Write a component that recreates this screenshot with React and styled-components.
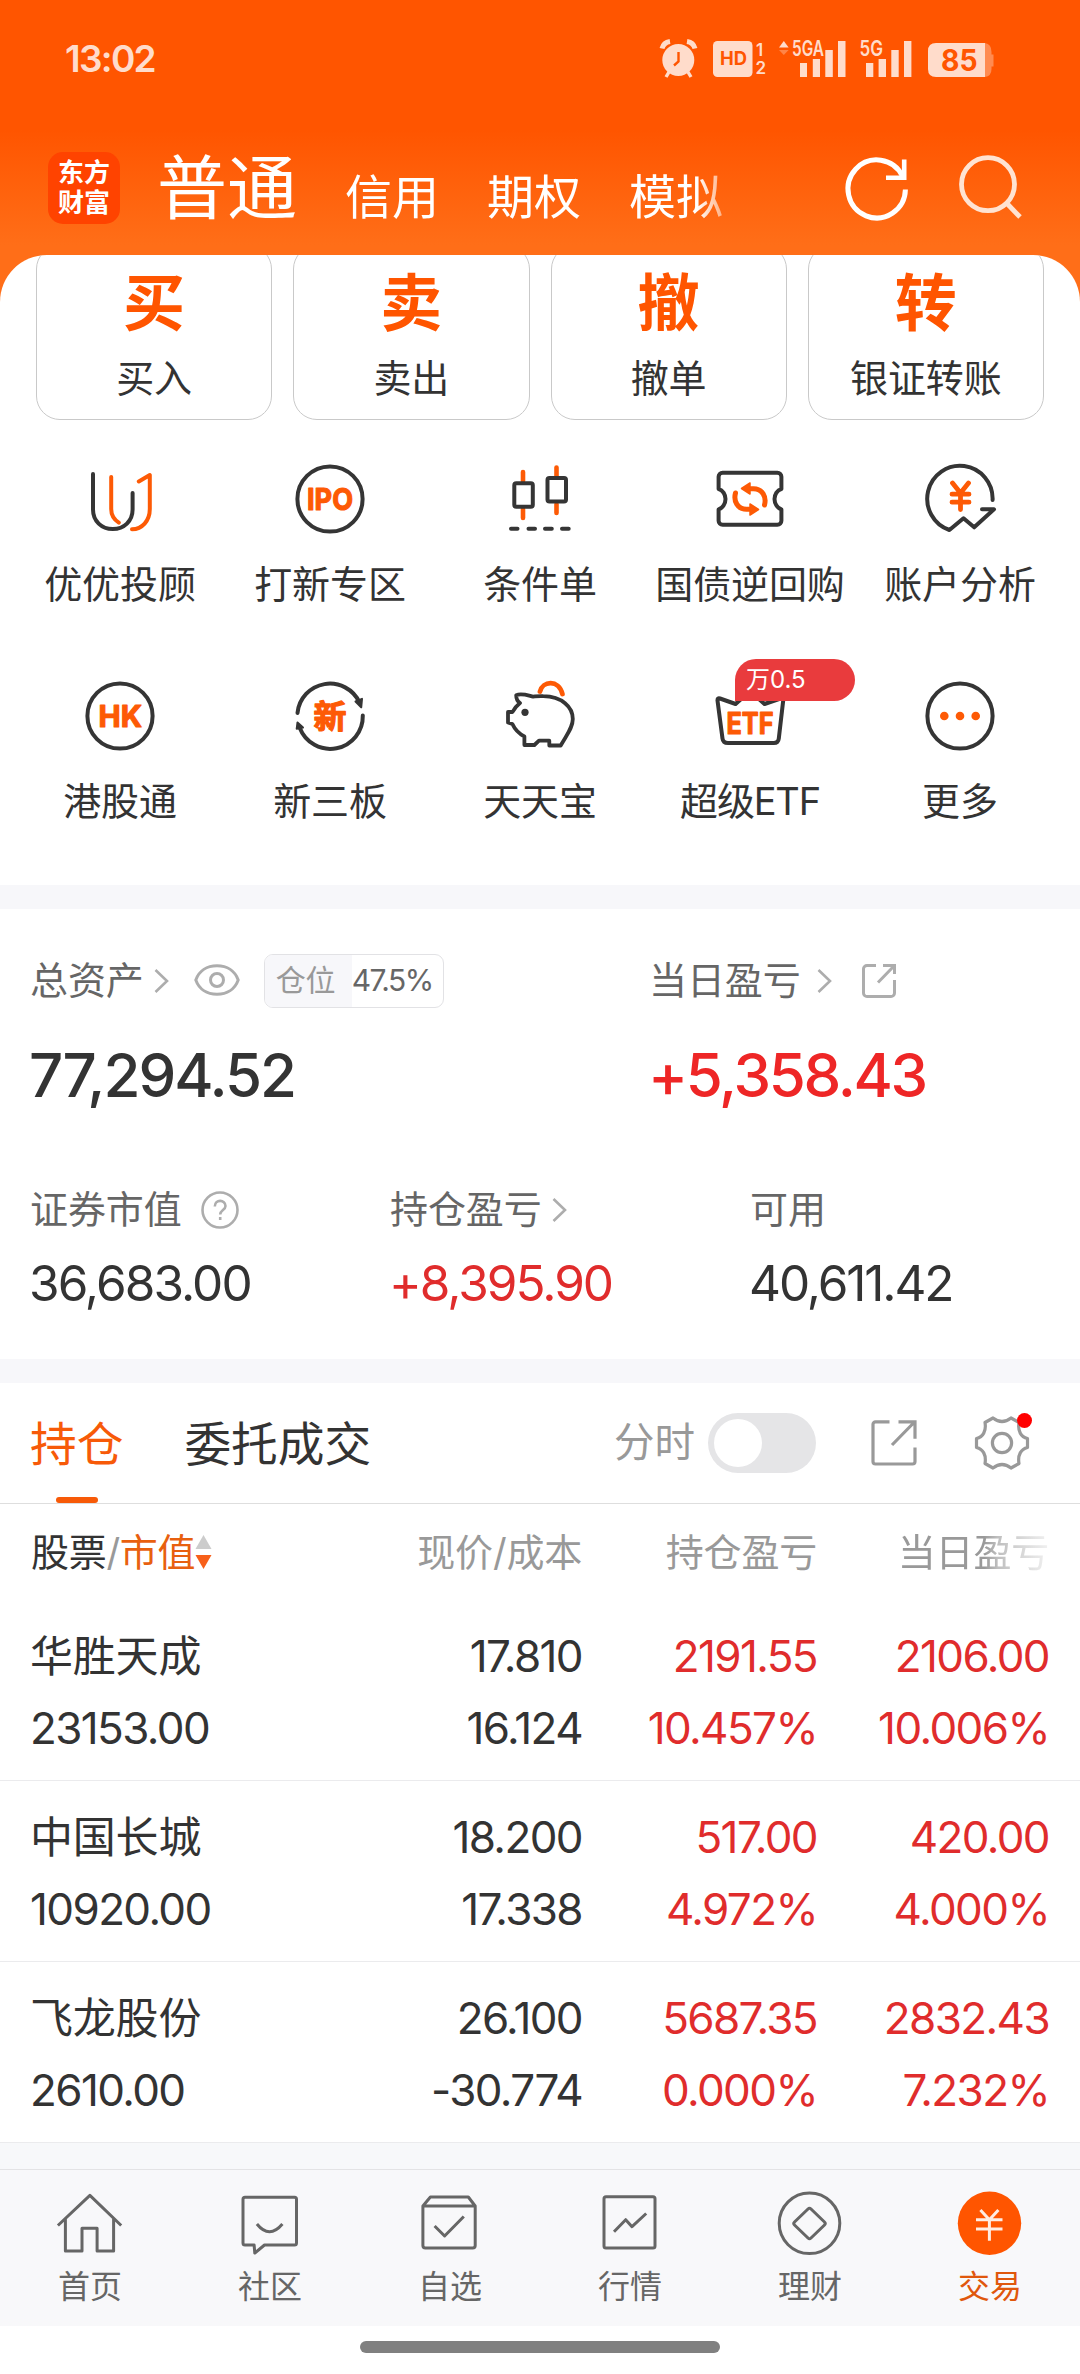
import React from "react";
import styled, { createGlobalStyle } from "styled-components";

const ORANGE = "#ff5500";
const RED = "#e02c2c";
const INK = "#333333";

const Global = createGlobalStyle`
  * { box-sizing: border-box; }
  body {
    margin: 0;
    background: #fff;
    color: ${INK};
    font-family: Inter, "Noto Sans CJK SC", sans-serif;
    -webkit-font-smoothing: antialiased;
  }
  svg { display: block; flex: none; overflow: visible; }
`;

const Screen = styled.div`
  width: 1080px;
  height: 2374px;
  display: flex;
  flex-direction: column;
  overflow: hidden;
`;

/* ---------- header ---------- */
const Hero = styled.header`
  height: 302px;
  margin-bottom: -47px;
  background: linear-gradient(180deg, #ff5500 0, #ff5500 130px, #ff6e18 245px, #ff6e18 100%);
`;

const StatusBar = styled.div`
  height: 120px;
  padding: 0 86px 2px 65px;
  display: flex;
  align-items: center;
  justify-content: space-between;
  color: #ffdccb;
`;

const Clock = styled.span`
  font-size: 37px;
  font-weight: 600;
  line-height: 40px;
  letter-spacing: -1.7px;
`;

const NavBar = styled.div`
  height: 135px;
  padding: 0 54px 0 48px;
  display: flex;
  align-items: center;
`;

const Logo = styled.div`
  width: 72px;
  height: 72px;
  border-radius: 15px;
  background: #ff4300;
  color: #fff;
  display: grid;
  place-content: center;
  font-size: 26px;
  line-height: 30px;
  font-weight: 700;
`;

const AccountTabs = styled.nav`
  margin: 11px 0 0 37px;
  width: 580px;
  display: flex;
  align-items: baseline;
  gap: 48px;
  color: #fff;
  mask-image: linear-gradient(90deg, #000 540px, transparent 590px);
`;

const AccountTab = styled.span`
  font-size: ${(p) => (p.$active ? 70 : 47)}px;
  line-height: 90px;
  white-space: nowrap;
`;

const NavIcons = styled.div`
  margin-left: auto;
  display: flex;
  align-items: center;
  gap: 49px;
`;

/* ---------- trade panel ---------- */
const TradePanel = styled.section`
  height: 630px;
  flex: none;
  background: #fff;
  border-radius: 47px 47px 0 0;
  overflow: hidden;
`;

const TradeCards = styled.div`
  margin-top: -10px;
  padding: 0 36px;
  display: grid;
  grid-template-columns: repeat(4, 1fr);
  gap: 21px;
`;

const TradeCard = styled.div`
  height: 175px;
  border: 1px solid #c9c9c9;
  border-radius: 24px;
  padding-top: 23px;
  display: flex;
  flex-direction: column;
  align-items: center;
  gap: 14px;
`;

const TradeGlyph = styled.span`
  font-size: 62px;
  line-height: 70px;
  font-weight: 700;
  color: ${ORANGE};
`;

const Label = styled.span`
  font-size: 38px;
  line-height: 50px;
  letter-spacing: ${(p) => p.$tight ? "-1.2px" : "-0.1px"};
  white-space: nowrap;
`;

const ToolGrid = styled.div`
  margin-top: 39px;
  padding: 0 15px;
  display: grid;
  grid-template-columns: repeat(5, 210px);
  row-gap: 67px;
`;

const Tool = styled.div`
  position: relative;
  display: flex;
  flex-direction: column;
  align-items: center;
  gap: 20px;
`;

const Badge = styled.span`
  position: absolute;
  left: 90px;
  top: -17px;
  width: 120px;
  height: 42px;
  padding-left: 11px;
  border-radius: 21px 21px 21px 0;
  background: #e93b3d;
  color: #fff;
  font-size: 24px;
  line-height: 42px;
`;

const Divider = styled.div`
  height: 24px;
  flex: none;
  background: #f7f7fa;
`;

/* ---------- assets ---------- */
const Assets = styled.section`
  height: 450px;
  flex: none;
  padding: 45px 30px 0;
`;

const AssetGrid = styled.div`
  display: grid;
  grid-template-columns: ${(p) => p.$cols};
  margin-top: ${(p) => p.$top || 0}px;
`;

const Metric = styled.div`
  display: flex;
  flex-direction: column;
  gap: ${(p) => p.$gap}px;
`;

const MetricHead = styled.div`
  height: ${(p) => p.$h}px;
  display: flex;
  align-items: center;
  font-size: 38px;
  line-height: 38px;
  letter-spacing: -0.1px;
  color: #666;
  white-space: nowrap;

  & > svg { margin-left: ${(p) => p.$space || 10}px; }
  & > svg + svg { margin-left: ${(p) => p.$next || 25}px; }
`;

const MetricText = styled.span`
  padding-bottom: 2px;
`;

const MetricValue = styled.div`
  margin-left: -1px;
  font-size: ${(p) => (p.$large ? 60 : 49.5)}px;
  line-height: ${(p) => (p.$large ? 60 : 50)}px;
  font-weight: ${(p) => (p.$large ? 500 : 400)};
  letter-spacing: ${(p) => p.$track}px;
  color: ${(p) => (p.$up ? (p.$large ? "#ee2626" : RED) : INK)};
  white-space: nowrap;
`;

const PositionPill = styled.span`
  margin-left: 24px;
  width: 180px;
  height: 54px;
  display: flex;
  border: 1px solid #e2e2e5;
  border-radius: 9px;
  overflow: hidden;
  font-size: 30px;
  line-height: 51px;
`;

const PillName = styled.span`
  width: 87px;
  padding-left: 11px;
  background: #f7f7fa;
  color: #999;
`;

const PillValue = styled.span`
  flex: 1;
  letter-spacing: -1.5px;
`;

/* ---------- holdings ---------- */
const TabRow = styled.div`
  height: 121px;
  flex: none;
  padding: 0 51px 0 30px;
  display: flex;
  align-items: center;
  border-bottom: 1px solid #dedede;
`;

const HoldTab = styled.div`
  position: relative;
  margin-right: 61px;
  padding-top: 2px;
  font-size: 46.7px;
  line-height: 118px;
  color: ${(p) => (p.$active ? "#f75a08" : INK)};

  &::after {
    content: "";
    display: ${(p) => (p.$active ? "block" : "none")};
    position: absolute;
    left: 26px;
    bottom: 0;
    width: 42px;
    height: 6px;
    border-radius: 3px;
    background: #f75a08;
  }
`;

const TabTools = styled.div`
  margin-left: auto;
  display: flex;
  align-items: center;
  color: #999;
  font-size: 40.5px;
  line-height: 60px;
`;

const Toggle = styled.span`
  margin: 0 55px 0 13px;
  width: 108px;
  height: 60px;
  padding: 6px;
  border-radius: 30px;
  background: #e5e5e7;

  &::before {
    content: "";
    display: block;
    width: 48px;
    height: 48px;
    border-radius: 50%;
    background: #fff;
  }
`;

const GearWrap = styled.span`
  position: relative;
  margin-left: 58px;

  &::after {
    content: "";
    position: absolute;
    left: 42px;
    top: -3px;
    width: 15px;
    height: 15px;
    border-radius: 50%;
    background: #ff0000;
  }
`;

const Row = styled.div`
  height: ${(p) => (p.$head ? 96 : 181)}px;
  flex: none;
  padding: ${(p) => (p.$head ? "0 31px 0 31px" : "24px 31px 0 30px")};
  display: grid;
  grid-template-columns: 1fr 200px 235px 232px;
  align-items: ${(p) => (p.$head ? "center" : "start")};
  border-bottom: ${(p) => (p.$head ? 0 : 1)}px solid #ebebed;
  font-size: 38px;
  line-height: 50px;
  color: #999;
`;

const HeadCell = styled.span`
  justify-self: end;
  letter-spacing: -0.2px;
  white-space: nowrap;
  mask-image: ${(p) => (p.$fade ? "linear-gradient(90deg, #000 86px, rgba(0,0,0,.62) 100px, rgba(0,0,0,.12) 152px)" : "none")};
`;

const SortCell = styled.span`
  display: flex;
  align-items: center;
  color: ${INK};
  letter-spacing: -0.3px;
`;

const Slash = styled.i`
  font-style: normal;
  color: #999;
`;

const SortKey = styled.b`
  font-weight: 400;
  color: #e8600f;
`;

const Cell = styled.div`
  display: flex;
  flex-direction: column;
  align-items: ${(p) => (p.$left ? "flex-start" : "flex-end")};
  gap: 8px;
  color: ${(p) => (p.$up ? RED : INK)};
`;

const Figure = styled.span`
  font-size: 44px;
  line-height: 64px;
  letter-spacing: -1.6px;
  white-space: nowrap;
`;

const StockName = styled.span`
  font-size: 43px;
  line-height: 64px;
  letter-spacing: -0.2px;
`;

/* ---------- bottom ---------- */
const Spacer = styled.div`
  height: 26px;
  flex: none;
  background: #f7f8fa;
`;

const BottomNav = styled.nav`
  height: 157px;
  flex: none;
  border-top: 1px solid #e3e3e5;
  background: #f8f8fa;
  display: grid;
  grid-template-columns: repeat(6, 180px);
`;

const BottomItem = styled.div`
  padding-top: 17px;
  display: flex;
  flex-direction: column;
  align-items: center;
  gap: 8px;
  font-size: 32px;
  line-height: 40px;
  color: ${(p) => (p.$active ? "#e0570c" : "#666")};
`;

const HomeBar = styled.div`
  width: 360px;
  height: 12px;
  flex: none;
  margin: 15px auto 0;
  border-radius: 6px;
  background: #808080;
`;

/* ---------- icons ---------- */
const StatusIcons = () => (
  <svg width="336" height="48" viewBox="658 36 336 48" fill="#ffdccb" fontFamily="Inter, sans-serif">
    <circle cx="678.3" cy="61" r="16" />
    <path d="M669 73l-3 5M688 73l3 5" stroke="#ffdccb" strokeWidth="3.4" />
    <path d="M662 49.5q1.5-6 8-7M695 49.5q-1.500-6-8-7" stroke="#ffdccb" strokeWidth="5" fill="none" />
    <path d="M678.500 53v9.500l-4.500 4" stroke="#ff5500" strokeWidth="2.400" fill="none" />
    <rect x="713" y="42" width="39.500" height="36" rx="4.500" />
    <text x="720" y="66" fontSize="18.500" fontWeight="700" fill="#ff5500" textLength="27" lengthAdjust="spacingAndGlyphs">HD</text>
    <text x="756" y="57" fontSize="17" fontWeight="600">1</text>
    <text x="755.500" y="75" fontSize="17" fontWeight="600">2</text>
    <path d="M779 48.500l4.800-6.500 4.800 6.500z" />
    <path d="M779 51h9.600l-4.800 5z" opacity=".35" />
    <text x="792" y="56.500" fontSize="21" fontWeight="600" textLength="32" lengthAdjust="spacingAndGlyphs">5GA</text>
    <path d="M800 64h7v14h-7zM812.800 60h7.200v18h-7.200zM825.300 51h7.500v27h-7.500zM838 42h7.500v36h-7.500z" />
    <text x="859.500" y="56.500" fontSize="21" fontWeight="600" textLength="23.500" lengthAdjust="spacingAndGlyphs">5G</text>
    <path d="M866 64h7.300v14h-7.300zM878.600 60h7.400v18h-7.400zM891.300 51h7.400v27h-7.400zM904 42h7.400v36h-7.400z" />
    <path d="M985 44q6.500 1 6.500 9v2.500h2v12h-2V70q0 7-6.500 8z" opacity=".4" />
    <path d="M985 44v34h-49q-8 0-8-8V52q0-8 8-8z" />
    <text x="941" y="72" fontSize="29.500" fontWeight="700" fill="#ff5500" textLength="36.500" lengthAdjust="spacingAndGlyphs">85</text>
  </svg>
);

const RefreshIcon = () => (
  <svg width="64" height="64" viewBox="844 155.500 64 64" fill="none" stroke="#fff" strokeWidth="5">
    <path d="M904.400 189A28.700 29 0 1 1 901.400 175.500" />
    <path d="M903.200 159v18.300H885" strokeWidth="4.600" />
  </svg>
);

const SearchIcon = () => (
  <svg width="68" height="66" viewBox="957 154.500 68 66" fill="none" stroke="#ffe3d2" strokeWidth="4.800">
    <circle cx="987" cy="183.700" r="26.500" />
    <path d="M1005.500 202.500L1019 216.500" />
  </svg>
);

const ToolIcon = ({ children }) => (
  <svg width="80" height="80" viewBox="0 0 80 80" fill="none" stroke="#353535" strokeWidth="4" strokeLinecap="round" strokeLinejoin="round">
    {children}
  </svg>
);

const OR = "#fd5a05";
const IconText = ({ x, y, w, size = 30, children }) => (
  <text x={x} y={y} fontSize={size} fontWeight="700" fontFamily='Inter, "Noto Sans CJK SC", sans-serif' fill={OR} stroke={OR} strokeWidth="1.2" textLength={w} lengthAdjust="spacingAndGlyphs">
    {children}
  </text>
);

const Swap = () => (
  <>
    <path d="M54.500 46c2.200-8-2-16.300-11-16.300h-3" stroke={OR} strokeWidth="5" />
    <path d="M31.500 29.500l8.500-5.500v11z" fill={OR} stroke={OR} strokeWidth="1.500" />
  </>
);

const tools = [
  {
    label: "优优投顾",
    icon: (
      <>
        <path d="M13 15v35.500C13 62 21.500 70 32.800 70s19.800-8 19.800-19.500V34" />
        <path d="M31.200 18v32c0 6 2.800 10.500 7.600 13.700M58.800 22.500L69.800 16v34c0 12-7.800 20-17.800 20.300" stroke={OR} />
      </>
    ),
  },
  {
    label: "打新专区",
    icon: (
      <>
        <circle cx="40" cy="40" r="32.600" />
        <IconText x="17" y="51" w="46">IPO</IconText>
      </>
    ),
  },
  {
    label: "条件单",
    icon: (
      <>
        <path d="M23 13v9M23 50v9M56.500 8.500V17M56.500 45v9" stroke={OR} strokeWidth="4.600" />
        <rect x="14.300" y="24.300" width="18.500" height="23.500" rx="2" />
        <rect x="47.500" y="19" width="18.500" height="23.500" rx="2" />
        <path d="M11 69.700h6.500M28.500 69.700H35M45 69.700h6.800M62 69.700h6.700" />
      </>
    ),
  },
  {
    label: "国债逆回购",
    icon: (
      <>
        <path d="M12.600 13.700h54.800a4 4 0 0 1 4 4V30C67 31 64.500 36 64.500 40s2.500 9 6.900 10.500v11.200a4 4 0 0 1-4 4H12.600a4 4 0 0 1-4-4V50.500C13 49 15.500 44 15.500 40S13 31 8.600 30V17.700a4 4 0 0 1 4-4Z" />
        <Swap />
        <g transform="rotate(180 40 40)"><Swap /></g>
      </>
    ),
  },
  {
    label: "账户分析",
    icon: (
      <>
        <path d="M72.600 41A32.700 33 0 1 0 29.400 71L43.500 59.300 54.200 68.300 74 50.300H62" />
        <path d="M32.500 24l8 10 8-10M32 35.200h17M32 43.200h17M40.500 35v15.500" stroke={OR} strokeWidth="4.800" />
      </>
    ),
  },
  {
    label: "港股通",
    icon: (
      <>
        <circle cx="40" cy="40" r="32.600" />
        <IconText x="18.500" y="51" w="43.500">HK</IconText>
      </>
    ),
  },
  {
    label: "新三板",
    icon: (
      <>
        <path d="M7.500 37A32.600 32.600 0 0 1 69.500 26.500M72.800 39.500A32.600 32.600 0 0 1 9.800 52" />
        <path d="M65.500 25.500l6.500-2.700-.8 8.500zM7.500 46.500l5.500 5-6.300 1.300z" fill="#353535" strokeWidth="2" />
        <IconText x="23.500" y="51.500" w="33" size={32}>新</IconText>
      </>
    ),
  },
  {
    label: "天天宝",
    icon: (
      <>
        <path d="M40 15.500C42.500 5 58.500 3 62.400 18" stroke={OR} strokeWidth="4.800" />
        <path d="M16.200 19.200c5-2.200 10.300-.2 17 1.400 3.500-.3 5.500-.6 10-.4C62 20.500 72.800 31 72.800 43c0 9-6 15.500-12.100 26.500H49.300v-4.800H39L34.400 69h-10v-8.500Q16 56 12.400 48L8 46.500V36h4.500Q15 31 20 27c-3-2-3.800-4-3.800-7.800Z" strokeWidth="3.800" />
        <circle cx="25" cy="36.300" r="3.600" fill="#353535" stroke="none" />
      </>
    ),
  },
  {
    label: "超级ETF",
    tight: true,
    badge: "万0.5",
    icon: (
      <>
        <path d="M10 22.500L25.600 28 40 15l14.500 13 16-5.500q3-.8 2.700 2l-4.400 38q-.5 4.500-5 4.500H18q-5 0-5.500-4.500l-5-38q-.2-2.800 2.500-2Z" />
        <IconText x="16.500" y="57.500" w="47">ETF</IconText>
      </>
    ),
  },
  {
    label: "更多",
    icon: (
      <>
        <circle cx="40" cy="40" r="32.600" />
        <g fill={OR} stroke="none">
          <circle cx="24.300" cy="40" r="4.300" />
          <circle cx="40" cy="40" r="4.300" />
          <circle cx="55.700" cy="40" r="4.300" />
        </g>
      </>
    ),
  },
];

const Chevron = () => (
  <svg width="15" height="24" viewBox="0 0 15 24" fill="none" stroke="#adadad" strokeWidth="2.600">
    <path d="M1.500 1l11.500 11L1.500 23" />
  </svg>
);

const EyeIcon = () => (
  <svg width="46" height="32" viewBox="0 1 46 32" fill="none" stroke="#adadad" strokeWidth="3">
    <path d="M1.800 16C5 7 13 1.800 23 1.800S41 7 44.200 16C41 25 33 30.200 23 30.200S5 25 1.800 16Z" />
    <circle cx="23" cy="16" r="6.500" />
  </svg>
);

const SmallShare = () => (
  <svg width="34" height="34" viewBox="0 0 34 34" fill="none" stroke="#adadad" strokeWidth="3">
    <path d="M14 1.500H5a3.500 3.500 0 0 0-3.500 3.500v24A3.500 3.500 0 0 0 5 32.500h24a3.500 3.500 0 0 0 3.500-3.500V16" />
    <path d="M21 1.500h11.500V10M32 2L16 18.500" />
  </svg>
);

const HelpIcon = () => (
  <svg width="38" height="38" viewBox="0 0 38 38" fill="none" stroke="#adadad" strokeWidth="2.600">
    <circle cx="19" cy="19" r="17.500" />
    <path d="M13.800 15.500c0-7.500 10.700-7.200 10.700-.6 0 4-5.300 4.200-5.300 8.600M19.200 26v3" />
  </svg>
);

const ShareIcon = () => (
  <svg width="46" height="46" viewBox="0 0 46 46" fill="none" stroke="#999" strokeWidth="3.200">
    <path d="M18.500 1.800H4.500a2.500 2.500 0 0 0-2.500 2.500v37.200A2.500 2.500 0 0 0 4.500 44h37a2.500 2.500 0 0 0 2.500-2.500V27.500M27.500 1.800H44v17M43 2.500L21 25" />
  </svg>
);

const GearIcon = () => (
  <svg width="54" height="54" viewBox="-27 -27 54 54" fill="none" stroke="#999" strokeWidth="3.200" strokeLinejoin="round">
    <circle r="9.600" />
    <path d="M-9-25Q0-18 9-25L17-20.500C15.500-12 19-6 25.500-4.500V4.500C19 6 15.500 12 17 20.500L9 25Q0 18-9 25L-17 20.500C-15.500 12-19 6-25.500 4.500V-4.500C-19-6-15.500-12-17-20.500Z" />
  </svg>
);

const SortIcon = () => (
  <svg width="17" height="36" viewBox="0 0 17 36">
    <path d="M8.500 1L16.500 15H.5z" fill="#ccc" />
    <path d="M8.500 35L16.500 21H.5z" fill="#f7601a" />
  </svg>
);

const BottomIcon = ({ children }) => (
  <svg width="72" height="72" viewBox="0 0 72 72" fill="none" stroke="#666" strokeWidth="3" strokeLinejoin="round">
    {children}
  </svg>
);

const bottomItems = [
  { label: "首页", icon: <path d="M3.900 38.500L35.900 8.300 67.200 38.500M11.400 31.500V64H28V41.300h15.100V64h16.500V31.500" /> },
  {
    label: "社区",
    icon: <path d="M11 10.300h49.500a2 2 0 0 1 2 2V56a2 2 0 0 1-2 2h-30L20.800 66 20.100 58H11a2 2 0 0 1-2-2V12.300a2 2 0 0 1 2-2ZM22.900 37q12.500 15.500 25.500 0" />,
  },
  {
    label: "自选",
    icon: <path d="M8.900 19L16.400 10h37.900l6.900 9v39.500a2.500 2.500 0 0 1-2.500 2.500H11.400a2.500 2.500 0 0 1-2.500-2.500ZM8.900 19h52.300M20.600 39l10 10 19.200-19.500" />,
  },
  {
    label: "行情",
    icon: <path d="M12 9.700h47a2 2 0 0 1 2 2V59a2 2 0 0 1-2 2H12a2 2 0 0 1-2-2V11.700a2 2 0 0 1 2-2ZM20 44.700l11.700-12 6.300 7L52.200 26.500" />,
  },
  {
    label: "理财",
    icon: (
      <>
        <circle cx="35.500" cy="36.300" r="30.300" />
        <path d="M34 22q1.500-1.500 3 0L50.500 35q1.500 1.500 0 3L37 51q-1.500 1.500-3 0L20.500 38q-1.500-1.500 0-3Z" />
      </>
    ),
  },
  {
    label: "交易",
    active: true,
    icon: (
      <>
        <circle cx="35.500" cy="36.300" r="31.700" fill={ORANGE} stroke="none" />
        <path d="M26.400 23l9 9.700 9-9.700M22 32.700h26.500M22 42h26.500M35.400 32.700v21" stroke="#ffece2" />
      </>
    ),
  },
];

const holdings = [
  { name: "华胜天成", rows: ["23153.00", "17.810", "16.124", "2191.55", "10.457%", "2106.00", "10.006%"] },
  { name: "中国长城", rows: ["10920.00", "18.200", "17.338", "517.00", "4.972%", "420.00", "4.000%"] },
  { name: "飞龙股份", rows: ["2610.00", "26.100", "-30.774", "5687.35", "0.000%", "2832.43", "7.232%"] },
];

const Pair = ({ top, bottom, up }) => (
  <Cell $up={up}>
    <Figure>{top}</Figure>
    <Figure>{bottom}</Figure>
  </Cell>
);

export default function App() {
  return (
    <Screen>
      <Global />
      <Hero>
        <StatusBar>
          <Clock>13:02</Clock>
          <StatusIcons />
        </StatusBar>
        <NavBar>
          <Logo>
            <span>东方</span>
            <span>财富</span>
          </Logo>
          <AccountTabs>
            <AccountTab $active>普通</AccountTab>
            <AccountTab>信用</AccountTab>
            <AccountTab>期权</AccountTab>
            <AccountTab>模拟</AccountTab>
          </AccountTabs>
          <NavIcons>
            <RefreshIcon />
            <SearchIcon />
          </NavIcons>
        </NavBar>
      </Hero>

      <TradePanel>
        <TradeCards>
          {[["买", "买入"], ["卖", "卖出"], ["撤", "撤单"], ["转", "银证转账"]].map(([glyph, name]) => (
            <TradeCard key={name}>
              <TradeGlyph>{glyph}</TradeGlyph>
              <Label>{name}</Label>
            </TradeCard>
          ))}
        </TradeCards>
        <ToolGrid>
          {tools.map((t) => (
            <Tool key={t.label}>
              <ToolIcon>{t.icon}</ToolIcon>
              <Label $tight={t.tight}>{t.label}</Label>
              {t.badge && <Badge>{t.badge}</Badge>}
            </Tool>
          ))}
        </ToolGrid>
      </TradePanel>

      <Divider />

      <Assets>
        <AssetGrid $cols="619px 1fr">
          <Metric $gap={37}>
            <MetricHead $h={54}>
              <MetricText>总资产</MetricText>
              <Chevron />
              <EyeIcon />
              <PositionPill>
                <PillName>仓位</PillName>
                <PillValue>47.5%</PillValue>
              </PositionPill>
            </MetricHead>
            <MetricValue $large $track={-2}>77,294.52</MetricValue>
          </Metric>
          <Metric $gap={37}>
            <MetricHead $h={54} $space={16} $next={30}>
              <MetricText>当日盈亏</MetricText>
              <Chevron />
              <SmallShare />
            </MetricHead>
            <MetricValue $large $up $track={-2.3}>+5,358.43</MetricValue>
          </Metric>
        </AssetGrid>
        <AssetGrid $cols="360px 360px 1fr" $top={85}>
          <Metric $gap={28}>
            <MetricHead $h={40} $space={19}>
              <MetricText>证券市值</MetricText>
              <HelpIcon />
            </MetricHead>
            <MetricValue $track={-1.9}>36,683.00</MetricValue>
          </Metric>
          <Metric $gap={28}>
            <MetricHead $h={40}>
              <MetricText>持仓盈亏</MetricText>
              <Chevron />
            </MetricHead>
            <MetricValue $up $track={-2}>+8,395.90</MetricValue>
          </Metric>
          <Metric $gap={28}>
            <MetricHead $h={40}>
              <MetricText>可用</MetricText>
            </MetricHead>
            <MetricValue $track={-2.1}>40,611.42</MetricValue>
          </Metric>
        </AssetGrid>
      </Assets>

      <Divider />

      <TabRow>
        <HoldTab $active>持仓</HoldTab>
        <HoldTab>委托成交</HoldTab>
        <TabTools>
          分时
          <Toggle />
          <ShareIcon />
          <GearWrap>
            <GearIcon />
          </GearWrap>
        </TabTools>
      </TabRow>

      <Row $head>
        <SortCell>
          股票<Slash>/</Slash>
          <SortKey>市值</SortKey>
          <SortIcon />
        </SortCell>
        <HeadCell>现价/成本</HeadCell>
        <HeadCell>持仓盈亏</HeadCell>
        <HeadCell $fade>当日盈亏</HeadCell>
      </Row>
      {holdings.map(({ name, rows: r }) => (
        <Row key={name}>
          <Cell $left>
            <StockName>{name}</StockName>
            <Figure>{r[0]}</Figure>
          </Cell>
          <Pair top={r[1]} bottom={r[2]} />
          <Pair top={r[3]} bottom={r[4]} up />
          <Pair top={r[5]} bottom={r[6]} up />
        </Row>
      ))}

      <Spacer />

      <BottomNav>
        {bottomItems.map((b) => (
          <BottomItem key={b.label} $active={b.active}>
            <BottomIcon>{b.icon}</BottomIcon>
            {b.label}
          </BottomItem>
        ))}
      </BottomNav>
      <HomeBar />
    </Screen>
  );
}
